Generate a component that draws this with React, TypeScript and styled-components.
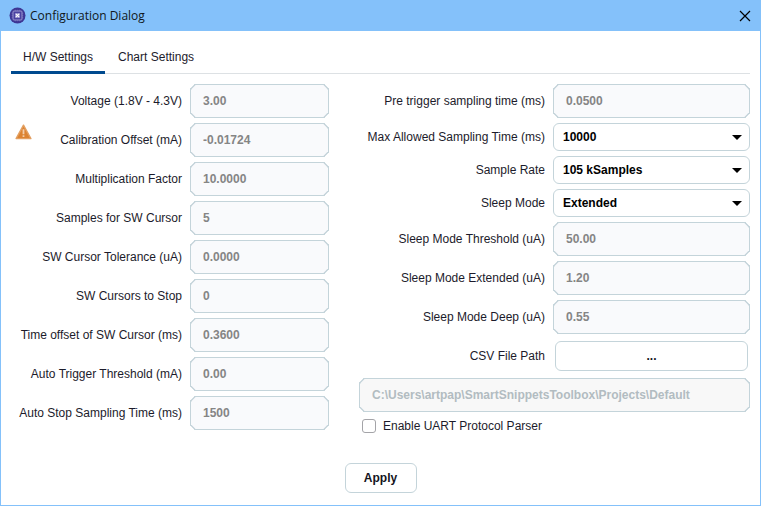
import React, { useState } from 'react';
import styled, { createGlobalStyle } from 'styled-components';

const GlobalStyle = createGlobalStyle`
  *, *::before, *::after { box-sizing: border-box; }
  html, body, #root { height: 100%; }
  body {
    margin: 0;
    background: #ffffff;
    color: #1c1b2b;
    font: 12px/16px "Liberation Sans", Arial, sans-serif;
  }
  button, input, select { font: inherit; margin: 0; }
`;

const Dialog = styled.main`
  display: flex;
  flex-direction: column;
  min-height: 100%;
  border: 1px solid #84c1fa;
  border-top: 0;
`;

const TitleBar = styled.header`
  display: flex;
  align-items: center;
  gap: 4px;
  height: 31px;
  padding: 0 9px 0 8px;
  background: #84c1fa;
`;

const Title = styled.h1`
  flex: 1;
  margin: 0;
  color: #101820;
  font: 400 12px/16px "Open Sans", "Noto Sans", sans-serif;
`;

const CloseButton = styled.button`
  display: flex;
  padding: 0;
  border: 0;
  background: none;
  color: #000000;
`;

const TabList = styled.div`
  display: flex;
  gap: 1px;
  margin: 10px 10px 0;
  border-bottom: 1px solid #dde1e4;
`;

const Tab = styled.button<{ $active: boolean }>`
  height: 33px;
  margin-bottom: -1px;
  padding: 2px 12px 0;
  border: 0;
  border-bottom: 3px solid ${({ $active }) => ($active ? '#004a8f' : 'transparent')};
  background: none;
  color: inherit;
`;

const Columns = styled.div`
  display: grid;
  grid-template-columns: 318fr 391fr;
  column-gap: 30px;
  padding: 10px 10px 0;
`;

const Column = styled.div`
  display: flex;
  flex-direction: column;
  gap: 5px;
`;

const Row = styled.div<{ $control: number }>`
  display: grid;
  grid-template-columns: 1fr ${({ $control }) => $control}px;
  align-items: center;
  column-gap: 8px;
`;

const LabelCell = styled.div`
  display: flex;
  justify-content: flex-end;
  align-items: center;
  align-self: stretch;
  white-space: nowrap;
`;

const WarningIcon = styled.svg`
  align-self: flex-start;
  margin: 1px auto 0 4px;
`;

const TextInput = styled.input<{ $muted?: boolean }>`
  width: 100%;
  height: 34px;
  padding: 0 12px;
  border: 1px solid #c4d4da;
  border-radius: 5px;
  corner-shape: bevel;
  background: ${({ $muted }) => ($muted ? '#f8f8f8' : '#f9fafc')};
  color: ${({ $muted }) => ($muted ? '#b2bcc1' : '#858585')};
  font-weight: 700;
`;

const SelectBox = styled.div`
  position: relative;
`;

const Select = styled.select`
  display: block;
  width: 100%;
  height: 28px;
  padding: 0 28px 0 9px;
  border: 1px solid #c4d4da;
  border-radius: 6px;
  appearance: none;
  background: #ffffff;
  color: #000000;
  font-weight: 700;
`;

const Caret = styled.svg`
  position: absolute;
  top: 12px;
  right: 8px;
  pointer-events: none;
`;

const Button = styled.button`
  height: 30px;
  padding: 0 18px;
  border: 1px solid #c4d4da;
  border-radius: 6px;
  background: #ffffff;
  color: #14141c;
  font-weight: 700;
`;

const BrowseButton = styled(Button)`
  margin: 2px;
`;

const CheckLabel = styled.label`
  display: flex;
  align-items: center;
  gap: 7px;
  margin: 1px 3px;
`;

const Checkbox = styled.input`
  width: 14px;
  height: 14px;
  border: 1px solid #a4a4a8;
  border-radius: 3px;
  appearance: none;
  background: #ffffff;

  &:checked {
    background: #004a8f;
    box-shadow: inset 0 0 0 2px #ffffff;
  }
`;

const Footer = styled.footer`
  display: flex;
  justify-content: center;
  margin-top: auto;
  padding: 12px;
`;

const ApplyButton = styled(Button)`
  min-width: 72px;
`;

type Setting = { id: string; label: string; value: string; warning?: boolean };

const hardwareSettings: Setting[] = [
  { id: 'voltage', label: 'Voltage (1.8V - 4.3V)', value: '3.00' },
  { id: 'calibration', label: 'Calibration Offset (mA)', value: '-0.01724', warning: true },
  { id: 'factor', label: 'Multiplication Factor', value: '10.0000' },
  { id: 'samples', label: 'Samples for SW Cursor', value: '5' },
  { id: 'tolerance', label: 'SW Cursor Tolerance (uA)', value: '0.0000' },
  { id: 'cursors', label: 'SW Cursors to Stop', value: '0' },
  { id: 'offset', label: 'Time offset of SW Cursor (ms)', value: '0.3600' },
  { id: 'trigger', label: 'Auto Trigger Threshold (mA)', value: '0.00' },
  { id: 'stop', label: 'Auto Stop Sampling Time (ms)', value: '1500' },
];

const samplingChoices: Setting[] = [
  { id: 'maxTime', label: 'Max Allowed Sampling Time (ms)', value: '10000' },
  { id: 'rate', label: 'Sample Rate', value: '105 kSamples' },
  { id: 'sleep', label: 'Sleep Mode', value: 'Extended' },
];

const sleepSettings: Setting[] = [
  { id: 'sleepThreshold', label: 'Sleep Mode Threshold (uA)', value: '50.00' },
  { id: 'sleepExtended', label: 'Sleep Mode Extended (uA)', value: '1.20' },
  { id: 'sleepDeep', label: 'Sleep Mode Deep (uA)', value: '0.55' },
];

function AppLogo() {
  return (
    <svg width="17" height="17" viewBox="0 0 17 17" aria-hidden="true">
      <circle cx="8.5" cy="8.5" r="8" fill="#3d3694" />
      <rect x="4" y="4" width="9" height="9" rx="1" fill="#4a42a0" stroke="#9a94cf" strokeWidth="1" />
      <path d="M6.5 2.8v1M8.5 2.8v1M10.5 2.8v1M6.5 13.2v1M8.5 13.2v1M10.5 13.2v1M2.8 6.5h1M2.8 8.5h1M2.8 10.5h1M13.2 6.5h1M13.2 8.5h1M13.2 10.5h1" stroke="#8079c2" strokeWidth="0.8" />
      <rect x="6" y="6" width="5" height="5" fill="#8a84c8" />
      <path d="M6.8 6.8l3.4 3.4M10.2 6.8l-3.4 3.4" stroke="#ffffff" strokeWidth="1.1" />
    </svg>
  );
}

function Warning() {
  return (
    <WarningIcon width="17" height="16" viewBox="0 0 17 16" role="img" aria-label="Warning">
      <path d="M8.5 1.2 15.9 14.6H1.1Z" fill="#dc8331" stroke="#e3a062" strokeWidth="1.4" strokeLinejoin="round" />
      <path d="M8.5 5.2v5M8.5 11.2v1.8" stroke="#f3cda8" strokeWidth="1.8" />
    </WarningIcon>
  );
}

function TextRow({ setting, control }: { setting: Setting; control: number }) {
  return (
    <Row $control={control}>
      <LabelCell>
        {setting.warning && <Warning />}
        <label htmlFor={setting.id}>{setting.label}</label>
      </LabelCell>
      <TextInput id={setting.id} type="text" defaultValue={setting.value} disabled />
    </Row>
  );
}

function SelectRow({ setting }: { setting: Setting }) {
  return (
    <Row $control={197}>
      <LabelCell>
        <label htmlFor={setting.id}>{setting.label}</label>
      </LabelCell>
      <SelectBox>
        <Select id={setting.id} defaultValue={setting.value}>
          <option>{setting.value}</option>
        </Select>
        <Caret width="10" height="5" viewBox="0 0 10 5" aria-hidden="true">
          <path d="M0 0h10L5 5z" fill="#000000" />
        </Caret>
      </SelectBox>
    </Row>
  );
}

export default function App() {
  const [tab, setTab] = useState('H/W Settings');

  return (
    <>
      <GlobalStyle />
      <Dialog>
        <TitleBar>
          <AppLogo />
          <Title>Configuration Dialog</Title>
          <CloseButton type="button" aria-label="Close">
            <svg width="12" height="12" viewBox="0 0 12 12" aria-hidden="true">
              <path d="M1 1l10 10M11 1L1 11" stroke="currentColor" strokeWidth="1.2" />
            </svg>
          </CloseButton>
        </TitleBar>
        <TabList role="tablist">
          {['H/W Settings', 'Chart Settings'].map((name) => (
            <Tab
              key={name}
              type="button"
              role="tab"
              aria-selected={tab === name}
              $active={tab === name}
              onClick={() => setTab(name)}
            >
              {name}
            </Tab>
          ))}
        </TabList>
        <Columns>
          <Column>
            {hardwareSettings.map((s) => (
              <TextRow key={s.id} setting={s} control={139} />
            ))}
          </Column>
          <Column>
            <TextRow
              setting={{ id: 'pretrigger', label: 'Pre trigger sampling time (ms)', value: '0.0500' }}
              control={197}
            />
            {samplingChoices.map((s) => (
              <SelectRow key={s.id} setting={s} />
            ))}
            {sleepSettings.map((s) => (
              <TextRow key={s.id} setting={s} control={197} />
            ))}
            <Row $control={197}>
              <LabelCell>
                <label htmlFor="browse">CSV File Path</label>
              </LabelCell>
              <BrowseButton id="browse" type="button">...</BrowseButton>
            </Row>
            <TextInput
              $muted
              type="text"
              aria-label="CSV file path"
              defaultValue="C:\Users\artpap\SmartSnippetsToolbox\Projects\Default"
              disabled
            />
            <CheckLabel>
              <Checkbox type="checkbox" />
              Enable UART Protocol Parser
            </CheckLabel>
          </Column>
        </Columns>
        <Footer>
          <ApplyButton type="button">Apply</ApplyButton>
        </Footer>
      </Dialog>
    </>
  );
}
